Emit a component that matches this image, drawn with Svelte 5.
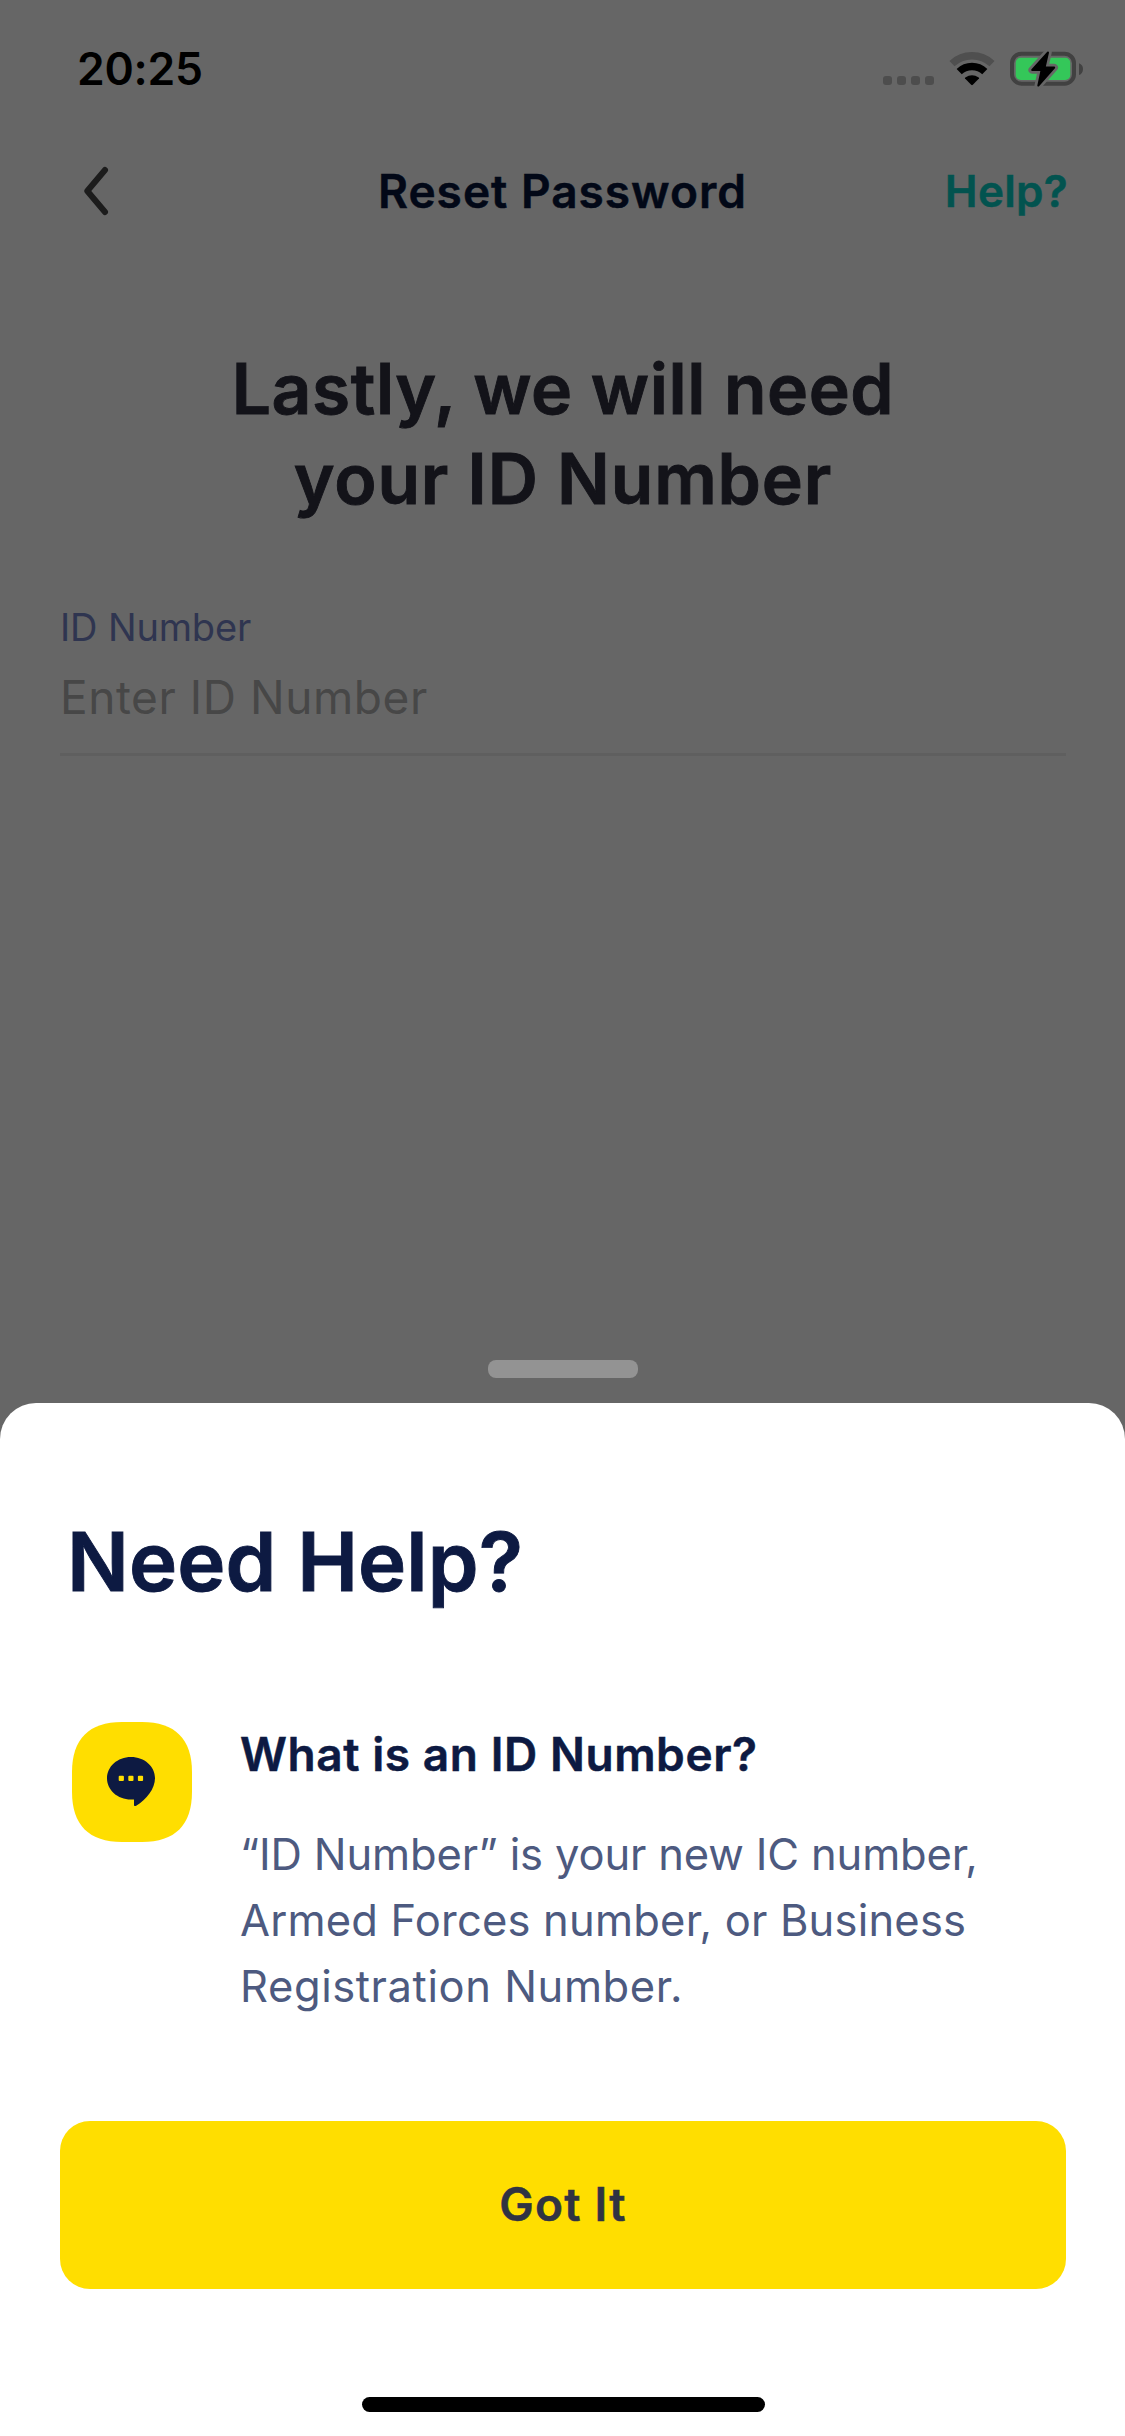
<script>
  const time = '20:25';
  const answerLines = [
    { text: '“ID Number” is your new IC number,', fit: 'tight' },
    { text: 'Armed Forces number, or Business', fit: 'normal' },
    { text: 'Registration Number.', fit: 'wide' }
  ];
</script>

<div class="screen">
  <header class="status">
    <span class="time">{time}</span>
    <div class="indicators">
      <div class="dots"><i></i><i></i><i></i><i></i></div>
      <svg class="wifi" width="46" height="36" viewBox="0 0 46 36" fill="none">
        <path d="M3 11.6A29.3 29.3 0 0 1 43 11.6" stroke="#4f4f4f" stroke-width="7.4" />
        <path d="M10.2 19.6A18.6 18.6 0 0 1 35.8 19.6" stroke="#000" stroke-width="7.4" />
        <path d="M16 26.6Q15.6 26 16.3 25.5Q23 20.8 29.7 25.5Q30.4 26 30 26.6L23.8 32.8Q23 33.5 22.2 32.8Z" fill="#000" />
      </svg>
      <svg class="battery" width="76" height="38" viewBox="0 0 76 38" fill="none">
        <rect x="2" y="2.7" width="62" height="30" rx="9.5" stroke="#414141" stroke-width="4" />
        <path d="M69 12.3C71.6 13.2 73 15.4 73 18S71.6 23.2 69 24.1Z" fill="#414141" />
        <rect x="5.7" y="6.7" width="54.6" height="22.3" rx="5" fill="#34c759" />
        <path class="bolt-gap" d="M38 1.5L22.2 19H31.6L28.3 34.6L44.2 16.6H34.6Z" />
        <path class="bolt" d="M38 1.5L22.2 19H31.6L28.3 34.6L44.2 16.6H34.6Z" />
      </svg>
    </div>
  </header>

  <nav>
    <button class="back" aria-label="Back">
      <svg width="26" height="50" viewBox="0 0 26 50" fill="none">
        <path d="M22 4L4.3 25L22 46" stroke="#1c1c1c" stroke-width="6" stroke-linecap="round" stroke-linejoin="round" />
      </svg>
    </button>
    <span class="title">Reset Password</span>
    <button class="help">Help?</button>
  </nav>

  <main>
    <h1><span class="first">Lastly, we will need</span><span class="second">your ID Number</span></h1>
    <div class="field">
      <span class="label">ID Number</span>
      <span class="placeholder">Enter ID Number</span>
    </div>
  </main>

  <div class="handle"></div>
  <section class="sheet">
    <h2>Need Help?</h2>
    <div class="faq">
      <svg class="badge" width="120" height="120" viewBox="0 0 120 120">
        <path d="M50 0H70C103 0 120 17 120 50V70C120 103 103 120 70 120H50C17 120 0 103 0 70V50C0 17 17 0 50 0Z" fill="#ffde00" />
        <path d="M59 35C72.5 35 83 44.5 83 56C83 67 74.5 77.4 64.2 83.7C63 84.4 62 84.2 62 83V77.6H59C45.5 77.5 35 68 35 56.3C35 44.5 45.5 35 59 35Z" fill="#0d1a42" />
        <g fill="#ffde00">
          <rect x="46.7" y="53.7" width="5.2" height="5.2" rx="1" />
          <rect x="56.3" y="53.7" width="5.2" height="5.2" rx="1" />
          <rect x="65.9" y="53.7" width="5.2" height="5.2" rx="1" />
        </g>
      </svg>
      <div class="copy">
        <h3>What is an ID Number?</h3>
        <p>
          {#each answerLines as line}
            <span class={line.fit}>{line.text}</span>
          {/each}
        </p>
      </div>
    </div>
    <button class="confirm">Got It</button>
    <div class="home"></div>
  </section>
</div>

<style>
  :global(body) {
    margin: 0;
    background: #666;
  }
  .screen {
    display: flex;
    flex-direction: column;
    width: 1125px;
    height: 2436px;
    overflow: hidden;
    background: #666;
    font-family: Inter, Roboto, sans-serif;
  }
  button {
    border: 0;
    padding: 0;
    background: none;
    font: inherit;
  }
  svg {
    display: block;
  }
  .status {
    display: flex;
    align-items: center;
    justify-content: space-between;
    box-sizing: border-box;
    height: 138px;
    padding: 0 39px 0 77px;
  }
  .time {
    color: #000;
    font-size: 44.5px;
    font-weight: 600;
    letter-spacing: -0.25px;
  }
  .indicators {
    display: flex;
    align-items: center;
  }
  .dots {
    display: flex;
    gap: 5px;
    margin: 23px 15px 0 0;
  }
  .dots i {
    width: 9px;
    height: 9px;
    border-radius: 3px;
    background: #4d4d4d;
  }
  .wifi {
    margin: 2px 15px 0 0;
  }
  .battery {
    margin-top: 2px;
  }
  .bolt-gap {
    fill: #666;
    stroke: #666;
    stroke-width: 7.5;
    stroke-linejoin: round;
  }
  .bolt {
    fill: #000;
    stroke: #000;
    stroke-width: 2;
    stroke-linejoin: round;
  }
  nav {
    display: grid;
    grid-template-columns: 1fr auto 1fr;
    align-items: center;
    box-sizing: border-box;
    height: 106px;
    padding: 0 57px;
  }
  .back {
    justify-self: start;
    margin-left: 26px;
  }
  .title {
    color: #020817;
    font-size: 46px;
    font-weight: 600;
    letter-spacing: 1px;
    -webkit-text-stroke: 0.5px;
  }
  .help {
    justify-self: end;
    color: #02534f;
    font-size: 44px;
    font-weight: 600;
    letter-spacing: 0.3px;
    -webkit-text-stroke: 0.5px;
  }
  main {
    display: flex;
    flex-direction: column;
    padding: 100px 59px 0 60px;
  }
  h1 {
    display: flex;
    flex-direction: column;
    align-items: center;
    margin: 0;
    color: #131319;
    font-size: 69.5px;
    font-weight: 600;
    line-height: 90px;
    -webkit-text-stroke: 0.9px;
  }
  .first {
    letter-spacing: 0.55px;
  }
  .second {
    letter-spacing: 0.85px;
  }
  .field {
    display: flex;
    flex-direction: column;
    margin-top: 81px;
    border-bottom: 3px solid #5f5f5f;
    padding-bottom: 26px;
  }
  .label {
    color: #2f3550;
    font-size: 38px;
    line-height: 45px;
    letter-spacing: -0.14px;
  }
  .placeholder {
    margin-top: 17px;
    color: #474747;
    font-size: 46px;
    line-height: 60px;
    letter-spacing: 0.56px;
  }
  .handle {
    align-self: center;
    width: 150px;
    height: 18px;
    margin: auto 0 25px 1px;
    border-radius: 8px;
    background: #939393;
  }
  .sheet {
    display: flex;
    flex-direction: column;
    box-sizing: border-box;
    height: 1033px;
    padding: 109px 59px 24px 60px;
    border-radius: 36px 36px 0 0;
    background: #fff;
  }
  h2 {
    margin: 0 0 0 7px;
    color: #0d1a42;
    font-size: 81.5px;
    font-weight: 600;
    line-height: 100px;
    letter-spacing: 0.1px;
    -webkit-text-stroke: 0.9px;
  }
  .faq {
    display: flex;
    gap: 48px;
    margin: 110px 0 0 12px;
  }
  h3 {
    margin: 0;
    color: #0d1a42;
    font-size: 46px;
    font-weight: 600;
    line-height: 64px;
    letter-spacing: 0.57px;
    -webkit-text-stroke: 0.5px;
  }
  p {
    display: flex;
    flex-direction: column;
    margin: 35px 0 0;
    color: #4d5a80;
    font-size: 43.5px;
    line-height: 66px;
    white-space: nowrap;
  }
  .tight {
    letter-spacing: -0.15px;
  }
  .normal {
    letter-spacing: 0.2px;
  }
  .wide {
    letter-spacing: 0.58px;
  }
  .confirm {
    flex: none;
    height: 168px;
    margin-top: 102px;
    border-radius: 30px;
    padding-bottom: 2px;
    background: #ffde00;
    color: #303342;
    font-size: 46px;
    font-weight: 600;
    letter-spacing: 1.3px;
    -webkit-text-stroke: 0.5px;
  }
  .home {
    align-self: center;
    width: 403px;
    height: 15px;
    margin-top: auto;
    border-radius: 8px;
    background: #000;
  }
</style>
